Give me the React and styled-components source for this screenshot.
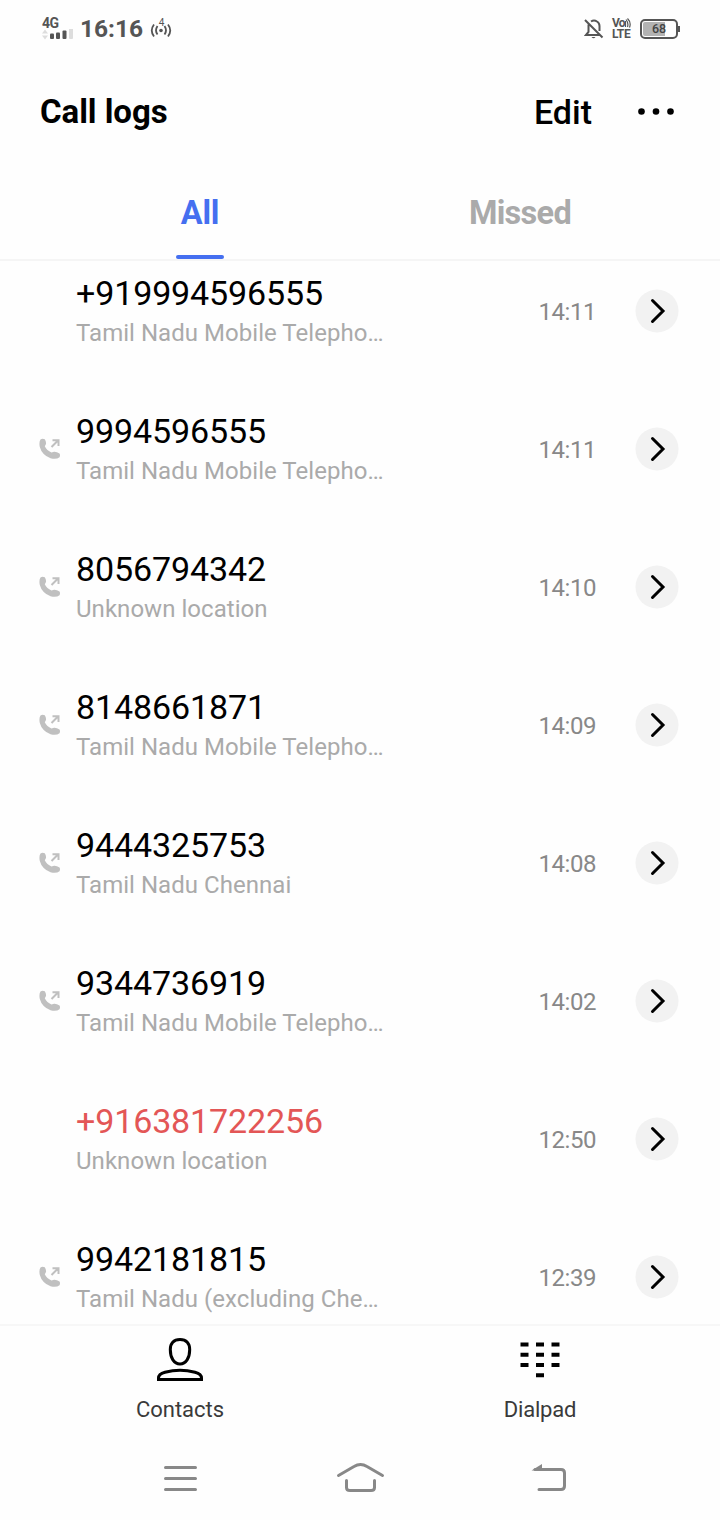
import React from 'react'
import styled, { createGlobalStyle } from 'styled-components'

const GlobalStyle = createGlobalStyle`
  body {
    margin: 0;
    background: #fefefe;
    font-family: 'Roboto', sans-serif;
  }
  svg {
    display: block;
    flex: none;
  }
`

const Screen = styled.div`
  width: 720px;
  height: 1520px;
  display: flex;
  flex-direction: column;
  overflow: hidden;
  background: #fefefe;
`

const StatusBar = styled.div`
  height: 58px;
  flex: none;
  box-sizing: border-box;
  padding: 0 40px 0 42px;
  display: flex;
  align-items: center;
  justify-content: space-between;
  color: #555;
`

const StatusGroup = styled.div`
  display: flex;
  align-items: center;
`

const Network = styled.div`
  width: 32px;
  height: 24px;
  font-size: 14px;
  line-height: 12px;
  font-weight: 700;
  letter-spacing: -0.6px;
`

const Clock = styled.div`
  margin: 0 7px 0 6px;
  font-size: 24.5px;
  line-height: 28px;
  font-weight: 700;
`

const Volte = styled.div`
  width: 19px;
  margin: 0 9px 0 8px;
  font-size: 12px;
  line-height: 11px;
  font-weight: 700;
  letter-spacing: -0.3px;
`

const VolteTop = styled.div`
  display: flex;
  letter-spacing: -0.8px;
`

const Battery = styled.div`
  width: 38px;
  height: 20px;
  box-sizing: border-box;
  border: 2px solid #555;
  border-radius: 5px;
  padding: 1px;
  display: flex;
`

const Charge = styled.div`
  width: 32px;
  height: 14px;
  border-radius: 2px;
  background: linear-gradient(to right, #b3b3b3 68%, transparent 68%);
  color: #444;
  font-size: 12.5px;
  line-height: 14px;
  font-weight: 500;
  text-align: center;
`

const BatteryTip = styled.div`
  width: 2px;
  height: 6px;
  background: #555;
`

const Header = styled.div`
  height: 108px;
  flex: none;
  box-sizing: border-box;
  padding: 0 44px 0 40px;
  display: flex;
  align-items: center;
`

const Title = styled.h1`
  flex: 1;
  margin: 0;
  font-size: 33px;
  line-height: 40px;
  font-weight: 700;
  letter-spacing: -0.05px;
`

const Edit = styled.div`
  margin-right: 44px;
  font-size: 34px;
  line-height: 40px;
  font-weight: 500;
`

const Tabs = styled.div`
  height: 95px;
  flex: none;
  box-sizing: border-box;
  padding: 0 40px;
  display: flex;
  border-bottom: 2px solid #f5f5f5;
`

const Tab = styled.div`
  flex: 1;
  display: flex;
  flex-direction: column;
  align-items: center;
  justify-content: space-between;
  color: ${({ $active }) => ($active ? '#456ff0' : '#aaa')};
  font-size: 32.5px;
  line-height: 94px;
  font-weight: 700;
  letter-spacing: ${({ $active }) => ($active ? '-0.2px' : '-0.7px')};
  &::after {
    content: '';
    width: 48px;
    height: 4px;
    margin-top: -5px;
    border-radius: 2px;
    background: ${({ $active }) => ($active ? '#456ff0' : 'transparent')};
  }
`

const LogWindow = styled.div`
  height: 1063px;
  flex: none;
  overflow: hidden;
`

const LogList = styled.div`
  margin-top: -19px;
`

const Row = styled.div`
  height: 138px;
  box-sizing: border-box;
  padding: 0 41px 0 39px;
  display: flex;
  align-items: center;
`

const CallType = styled.div`
  width: 37px;
`

const Caller = styled.div`
  flex: 1;
`

const Number = styled.div`
  color: ${({ $missed }) => ($missed ? '#e35656' : '#000')};
  font-size: 34px;
  line-height: 42px;
  letter-spacing: -0.12px;
`

const Place = styled.div`
  margin-bottom: -1px;
  color: #aaa;
  font-size: 24px;
  line-height: 38px;
  letter-spacing: 0.04px;
`

const Time = styled.div`
  margin-right: 39px;
  padding-top: 1px;
  color: #888;
  font-size: 24px;
  letter-spacing: -0.45px;
`

const Detail = styled.div`
  width: 44px;
  height: 44px;
`

const BottomBar = styled.div`
  height: 111px;
  flex: none;
  border-top: 2px solid #f7f7f7;
  display: flex;
`

const BottomItem = styled.div`
  flex: 1;
  padding-top: 10px;
  display: flex;
  flex-direction: column;
  align-items: center;
  gap: 14px;
  color: #3a3a3a;
  font-size: 22px;
  line-height: 28px;
  letter-spacing: ${({ $spacing }) => $spacing || '0'};
`

const SystemBar = styled.div`
  flex: 1;
  box-sizing: border-box;
  padding: 17px 151px 0 161px;
  display: flex;
  justify-content: space-between;
`

const calls = [
  { number: '+919994596555', place: 'Tamil Nadu Mobile Telepho…', time: '14:11' },
  { number: '9994596555', place: 'Tamil Nadu Mobile Telepho…', time: '14:11', outgoing: true },
  { number: '8056794342', place: 'Unknown location', time: '14:10', outgoing: true },
  { number: '8148661871', place: 'Tamil Nadu Mobile Telepho…', time: '14:09', outgoing: true },
  { number: '9444325753', place: 'Tamil Nadu Chennai', time: '14:08', outgoing: true },
  { number: '9344736919', place: 'Tamil Nadu Mobile Telepho…', time: '14:02', outgoing: true },
  { number: '+916381722256', place: 'Unknown location', time: '12:50', missed: true },
  { number: '9942181815', place: 'Tamil Nadu (excluding Che…', time: '12:39', outgoing: true },
]

const SignalIcon = () => (
  <svg width="32" height="12" viewBox="0 0 32 12">
    <path d="M0 4.500L3 0.500L6 4.500ZM0 6.500L3 10.500L6 6.500Z" fill="#ddd" />
    <g fill="#555">
      <rect x="8" y="4.500" width="4" height="5.500" rx="1" />
      <rect x="14" y="3.500" width="4" height="6.500" rx="1" />
      <rect x="20.500" y="1.500" width="4" height="8.500" rx="1" />
    </g>
    <rect x="27" y="-0.500" width="4" height="10.500" rx="1" fill="#ddd" />
  </svg>
)

const HotspotIcon = () => (
  <svg width="22" height="22" viewBox="0 0 22 22" fill="none" stroke="#555" strokeWidth="1.8">
    <circle cx="11" cy="12.500" r="1.800" fill="#555" stroke="none" />
    <path d="M7.500 8Q4.500 12.500 7.500 16.500M14.500 8Q17.500 12.500 14.500 16.500M4 6.500Q-.5 12.500 4 18.500M18 6.500Q22.500 12.500 18 18.500" />
    <text x="11.500" y="8" fontSize="10" textAnchor="middle" fill="#555" stroke="none">4</text>
  </svg>
)

const MutedIcon = () => (
  <svg width="20" height="22" viewBox="0 0 20 22" fill="none" stroke="#555" strokeWidth="2">
    <path d="M4.500 6.500V14L2 17H16M7 3.500Q10 1.500 13 3.500Q15.500 5 15.500 8V13M1 2L18.500 19.500" />
    <path d="M7.500 19H11.500Q9.500 21.500 7.500 19Z" fill="#555" stroke="none" />
  </svg>
)

const VoiceWaves = () => (
  <svg width="6" height="10" viewBox="0 0 6 10" fill="none" stroke="#555" strokeWidth="1.200">
    <path d="M0.500 3V9M1 1.500Q3.800 5 2.500 9M2.500 0.500Q6.500 4.500 4.500 9.500" />
  </svg>
)

const MoreIcon = () => (
  <svg width="40" height="8" viewBox="0 0 40 8">
    <circle cx="5.500" cy="3.500" r="3.300" />
    <circle cx="20" cy="3.500" r="3.300" />
    <circle cx="34.500" cy="3.500" r="3.300" />
  </svg>
)

const OutgoingIcon = () => (
  <svg width="22" height="22" viewBox="0 0 22 22">
    <path
      d="M1.500 1.500Q3.500 0 5.800 1.300Q7.300 3.500 7 6L5.800 8.300Q7.800 12.500 12.500 14.500L15 13.800Q17.500 13.500 20.500 15.500Q21.500 17 20.500 19.300Q17.500 21.700 11.500 20.300Q3 17 .8 9Q-.2 4 1.500 1.500Z"
      fill="#c0c0c0"
    />
    <path d="M12.500 9L18.500 3M13.500 2.200H19.500V8" fill="none" stroke="#c0c0c0" strokeWidth="2" />
  </svg>
)

const ChevronIcon = () => (
  <svg width="44" height="44" viewBox="0 0 44 44">
    <circle cx="22" cy="22" r="21.500" fill="#f2f2f2" />
    <path
      d="M17.500 11.500L28 22L17.500 32.500"
      fill="none"
      stroke="#000"
      strokeWidth="3"
      strokeLinecap="round"
    />
  </svg>
)

const ContactsIcon = () => (
  <svg width="48" height="46" viewBox="0 0 48 46" fill="none" stroke="#000" strokeWidth="3">
    <path d="M24 3.500C17.500 3.500 14.300 7.500 14.300 13.500C14.300 22 18 28 24 28S33.700 22 33.700 13.500C33.700 7.500 30.500 3.500 24 3.500Z" />
    <path d="M2.500 43.500V42Q2.500 38 9 36.200Q24 32.500 39 36.200Q45.500 38 45.500 42V43.500Z" />
  </svg>
)

const DialpadIcon = () => (
  <svg width="40" height="46" viewBox="0 0 40 46" stroke="#000" strokeWidth="4">
    <path d="M0.500 8.500H8.500M16 8.500H24M31.500 8.500H39.500M0.500 18.800H8.500M16 18.800H24M31.500 18.800H39.500M0.500 29H8.500M16 29H24M31.500 29H39.500M16 39.200H24" />
  </svg>
)

const SystemIcon = ({ width, children }) => (
  <svg
    width={width}
    height="44"
    viewBox={`0 0 ${width} 44`}
    fill="none"
    stroke="#888"
    strokeWidth="3"
    strokeLinecap="round"
  >
    {children}
  </svg>
)

const CallRow = ({ number, place, time, outgoing, missed }) => (
  <Row>
    <CallType>{outgoing && <OutgoingIcon />}</CallType>
    <Caller>
      <Number $missed={missed}>{number}</Number>
      <Place>{place}</Place>
    </Caller>
    <Time>{time}</Time>
    <Detail>
      <ChevronIcon />
    </Detail>
  </Row>
)

const App = () => {
  return (
    <Screen>
      <GlobalStyle />
      <StatusBar>
        <StatusGroup>
          <Network>
            4G
            <SignalIcon />
          </Network>
          <Clock>16:16</Clock>
          <HotspotIcon />
        </StatusGroup>
        <StatusGroup>
          <MutedIcon />
          <Volte>
            <VolteTop>
              Vo
              <VoiceWaves />
            </VolteTop>
            LTE
          </Volte>
          <Battery>
            <Charge>68</Charge>
          </Battery>
          <BatteryTip />
        </StatusGroup>
      </StatusBar>
      <Header>
        <Title>Call logs</Title>
        <Edit>Edit</Edit>
        <MoreIcon />
      </Header>
      <Tabs>
        <Tab $active>All</Tab>
        <Tab>Missed</Tab>
      </Tabs>
      <LogWindow>
        <LogList>
          {calls.map((call) => (
            <CallRow key={call.number} {...call} />
          ))}
        </LogList>
      </LogWindow>
      <BottomBar>
        <BottomItem>
          <ContactsIcon />
          Contacts
        </BottomItem>
        <BottomItem $spacing="-0.2px">
          <DialpadIcon />
          Dialpad
        </BottomItem>
      </BottomBar>
      <SystemBar>
        <SystemIcon width={38}>
          <path d="M4.500 13.500H34.500M4.500 24.500H34.500M4.500 35.500H34.500" />
        </SystemIcon>
        <SystemIcon width={60}>
          <path d="M3.500 21.500L19 12.500Q25.500 8.500 32 12.500L47.500 21.500M11.500 26.500V33.500Q11.500 36.500 15 36.500H36Q39.500 36.500 39.500 33.500V26.500" />
        </SystemIcon>
        <SystemIcon width={38}>
          <path d="M4 15.500H30Q33.500 15.500 33.500 19V32Q33.500 35.500 30 35.500H8" />
          <path d="M0.500 16.500L11 10V16.500Z" fill="#888" stroke="none" />
        </SystemIcon>
      </SystemBar>
    </Screen>
  )
}

export default App
